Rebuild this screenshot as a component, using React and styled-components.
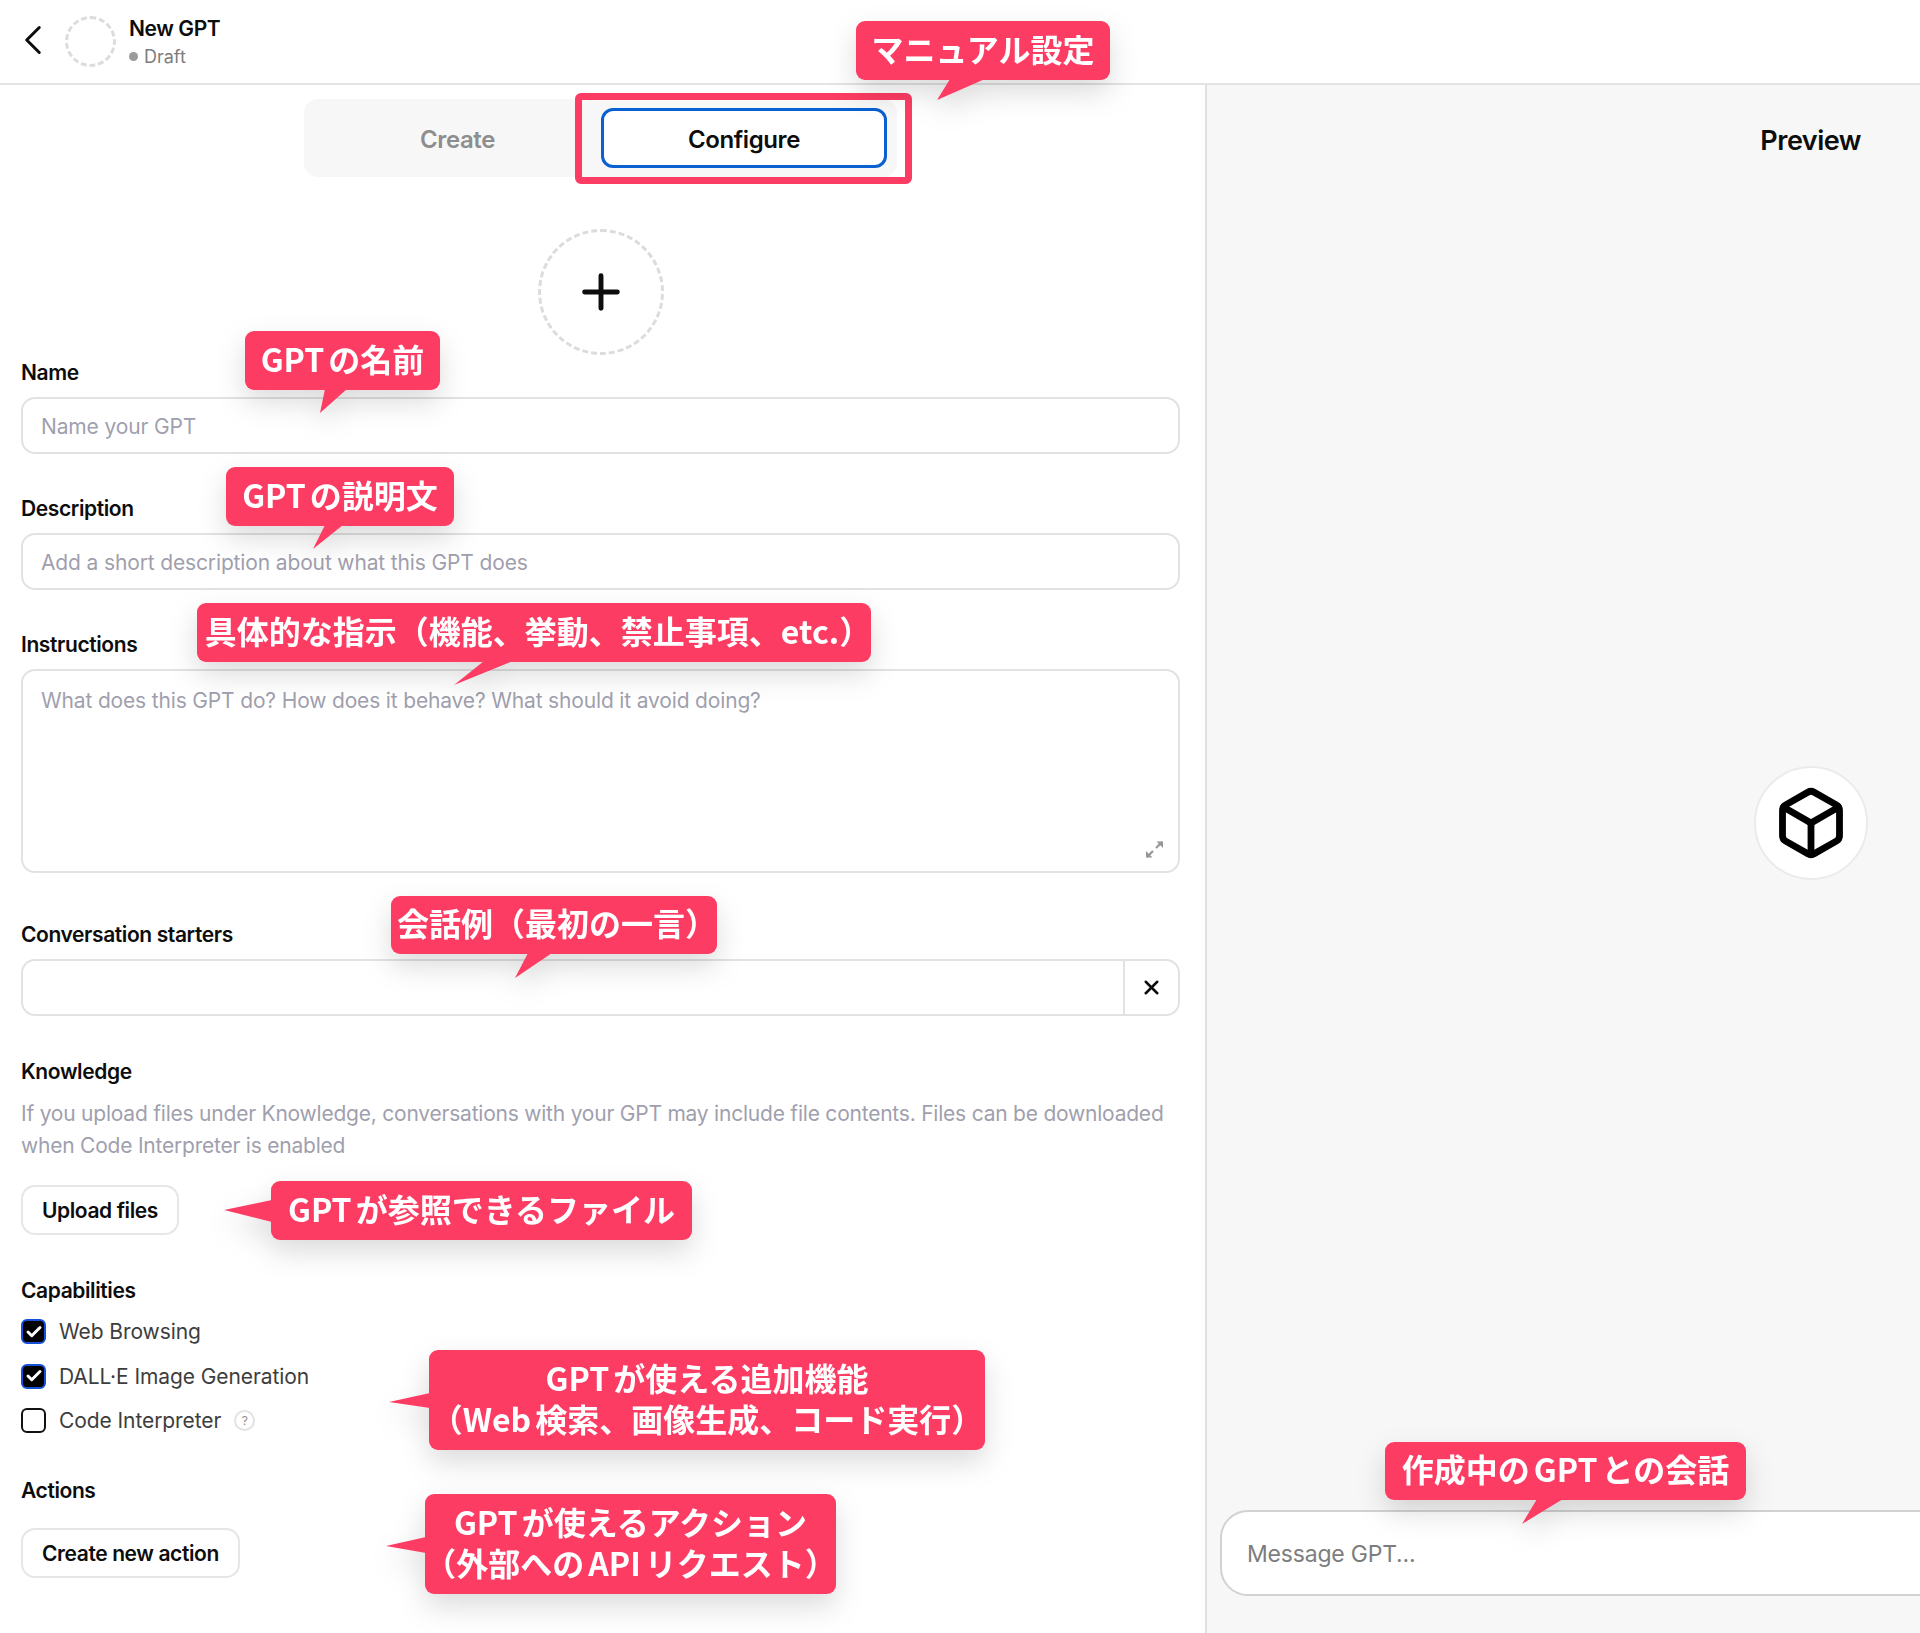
import styled, { createGlobalStyle } from 'styled-components';
import { ChevronLeft, Plus, X, Box, Check } from 'lucide-react';

const GlobalStyle = createGlobalStyle`
  html, body {
    margin: 0;
    padding: 0;
    background: #fff;
  }
  * {
    box-sizing: border-box;
  }
`

const UI_FONT = `Inter, "Noto Sans", "Liberation Sans", sans-serif`
const PINK = '#fd3c63'

const Page = styled.div`
  position: relative;
  width: 1920px;
  height: 1633px;
  overflow: hidden;
  font-family: ${UI_FONT};
  color: #0d0d0d;
  display: flex;
  flex-direction: column;
`

const TopBar = styled.header`
  height: 85px;
  flex: none;
  display: flex;
  align-items: center;
  padding-left: 8px;
  border-bottom: 2px solid #e3e3e3;
`

const BackIcon = styled(ChevronLeft)`
  width: 50px;
  height: 50px;
  margin-bottom: 3px;
  stroke-width: 1.45;
  color: #0d0d0d;
  flex: none;
`

const TopAvatar = styled.div`
  width: 51px;
  height: 51px;
  margin-left: 7px;
  margin-right: 13px;
  border: 3px dashed #dcdcdc;
  border-radius: 50%;
  flex: none;
`

const TitleBlock = styled.div`
  display: flex;
  flex-direction: column;
  gap: 2px;
`

const Title = styled.div`
  font-size: 21px;
  line-height: 28px;
  font-weight: 600;
  letter-spacing: -0.4px;
`

const DraftRow = styled.div`
  display: flex;
  align-items: center;
  gap: 6px;
  font-size: 18px;
  line-height: 24px;
  color: #7d7d7d;
`

const DraftDot = styled.span`
  width: 9px;
  height: 9px;
  border-radius: 50%;
  background: #9b9b9b;
`

const Main = styled.div`
  flex: 1;
  min-height: 0;
  display: flex;
`

const Editor = styled.div`
  width: 1205px;
  flex: none;
  padding: 14px 25px 0 21px;
  display: flex;
  flex-direction: column;
`

const Tabs = styled.div`
  width: 593px;
  height: 78px;
  margin-left: 283px;
  padding: 9px 10px;
  display: grid;
  grid-template-columns: 1fr 286px;
  background: #f7f7f7;
  border-radius: 14px;
  flex: none;
`

const Tab = styled.button`
  font-family: inherit;
  font-size: 24px;
  font-weight: 600;
  letter-spacing: -0.4px;
  background: ${(p) => (p.$active ? '#fff' : 'transparent')};
  color: ${(p) => (p.$active ? '#0d0d0d' : '#8e8e8e')};
  border: ${(p) => (p.$active ? '3px solid #0a60d0' : 'none')};
  border-radius: 12px;
  height: 60px;
  padding: 2px 0 0;
`

const AvatarPicker = styled.div`
  width: 126px;
  height: 126px;
  margin: 52px auto 5px;
  display: flex;
  align-items: center;
  justify-content: center;
  border: 3px dashed #dcdcdc;
  border-radius: 50%;
  flex: none;
`

const PlusIcon = styled(Plus)`
  width: 56px;
  height: 56px;
  stroke-width: 2.1;
  color: #0d0d0d;
`

const Section = styled.section`
  margin-bottom: ${(p) => p.$after || 42}px;
  flex: none;
`

const Label = styled.div`
  font-size: 21px;
  line-height: 26px;
  font-weight: 600;
  letter-spacing: -0.4px;
  margin-bottom: ${(p) => p.$after || 11}px;
`

const TextInput = styled.input`
  display: block;
  width: 100%;
  height: 57px;
  padding: 2px 18px 0;
  font-family: inherit;
  font-size: 21px;
  letter-spacing: -0.14px;
  background: #fff;
  border: 2px solid #e2e2e2;
  border-radius: 14px;
  outline: none;

  &::placeholder {
    color: #9f9fae;
    opacity: 1;
  }
`

const TextAreaWrap = styled.div`
  position: relative;
  height: 204px;
`

const TextArea = styled.textarea`
  display: block;
  width: 100%;
  height: 100%;
  padding: 16px 18px;
  font-family: inherit;
  font-size: 21px;
  line-height: 28px;
  letter-spacing: -0.16px;
  background: #fff;
  border: 2px solid #e2e2e2;
  border-radius: 14px;
  outline: none;
  resize: none;

  &::placeholder {
    color: #9f9fae;
    opacity: 1;
  }
`

const ExpandIcon = styled.svg`
  position: absolute;
  right: 16px;
  bottom: 14px;
  width: 19px;
  height: 19px;
  color: #969696;
`

const StarterRow = styled.div`
  display: flex;
  height: 57px;
  background: #fff;
  border: 2px solid #e2e2e2;
  border-radius: 14px;
`

const StarterInput = styled.div`
  flex: 1;
`

const StarterRemove = styled.div`
  width: 55px;
  flex: none;
  display: flex;
  align-items: center;
  justify-content: center;
  border-left: 2px solid #e2e2e2;
`

const RemoveIcon = styled(X)`
  width: 23px;
  height: 23px;
  stroke-width: 2.6;
  color: #0d0d0d;
`

const Hint = styled.p`
  margin: 0 0 23px;
  font-size: 21px;
  line-height: 32px;
  letter-spacing: -0.22px;
  color: #9f9fae;
  white-space: nowrap;
`

const OutlineButton = styled.button`
  display: block;
  height: ${(p) => p.$height || 50}px;
  padding: 0 19px;
  font-family: inherit;
  font-size: 21px;
  font-weight: 600;
  letter-spacing: -0.4px;
  color: #0d0d0d;
  background: #fff;
  border: 2px solid #e6e6e6;
  border-radius: 14px;
`

const CheckList = styled.div`
  display: flex;
  flex-direction: column;
  gap: 19.5px;
`

const CheckRow = styled.div`
  display: flex;
  align-items: center;
  height: 25px;
  gap: 13px;
  font-size: 21px;
  letter-spacing: -0.08px;
  color: #3d3d3d;
`

const CheckBox = styled.span`
  width: 25px;
  height: 25px;
  flex: none;
  display: flex;
  align-items: center;
  justify-content: center;
  background: ${(p) => (p.$checked ? '#000' : '#fff')};
  border: 2px solid ${(p) => (p.$checked ? '#1450d8' : '#111')};
  border-radius: 6px;
`

const CheckMark = styled(Check)`
  width: 18px;
  height: 18px;
  stroke-width: 4;
  color: #fff;
`

const HelpDot = styled.span`
  width: 21px;
  height: 21px;
  display: flex;
  align-items: center;
  justify-content: center;
  font-size: 12px;
  color: #8e8e8e;
  border: 2px solid #e3e3e3;
  border-radius: 50%;
`

const PreviewPane = styled.div`
  flex: 1;
  min-width: 0;
  display: flex;
  flex-direction: column;
  background: #f7f7f7;
  border-left: 2px solid #e0e0e0;
  overflow: hidden;
`

const PreviewHeader = styled.div`
  height: 112px;
  padding: 29px 59px 0 0;
  text-align: right;
  font-size: 27px;
  line-height: 54px;
  font-weight: 600;
  letter-spacing: -0.5px;
  flex: none;
`

const PreviewBody = styled.div`
  flex: 1;
  display: flex;
  align-items: center;
  justify-content: flex-end;
  padding: 0 52px 62px 0;
`

const CubeBadge = styled.div`
  width: 114px;
  height: 114px;
  display: flex;
  align-items: center;
  justify-content: center;
  background: #fff;
  border: 2px solid #ebebeb;
  border-radius: 50%;
`

const CubeIcon = styled(Box)`
  width: 76px;
  height: 76px;
  stroke-width: 2.15;
  color: #000;
`

const MessageBar = styled.div`
  width: 900px;
  height: 86px;
  margin: 0 0 37px 13px;
  padding: 2px 25px 0;
  display: flex;
  align-items: center;
  background: #fff;
  border: 2px solid #d2d2d2;
  border-radius: 28px;
  flex: none;
`

const MessageInput = styled.input`
  flex: 1;
  border: none;
  outline: none;
  padding: 0;
  font-family: inherit;
  font-size: 23px;
  letter-spacing: -0.2px;
  background: transparent;

  &::placeholder {
    color: #7d7d7d;
    opacity: 1;
  }
`

const Highlight = styled.div`
  position: absolute;
  left: 575px;
  top: 93px;
  width: 337px;
  height: 91px;
  border: 7px solid ${PINK};
  border-radius: 6px;
`

const Callout = styled.div`
  position: absolute;
  left: ${(p) => p.$x}px;
  top: ${(p) => p.$y}px;
  width: ${(p) => p.$w}px;
  height: ${(p) => p.$h}px;
  padding: 0 0 5px ${(p) => p.$nudge || 0}px;
  display: flex;
  flex-direction: column;
  align-items: center;
  justify-content: center;
  background: ${PINK};
  border-radius: 9px;
  filter: drop-shadow(0 12px 14px rgba(0, 0, 0, 0.14));
  color: #fff;
  font-family: "Noto Sans CJK JP", "Liberation Sans", sans-serif;
  font-size: 32px;
  line-height: 41px;
  font-weight: 700;
  white-space: nowrap;
  word-spacing: -0.1em;
`

const Tail = styled.svg`
  position: absolute;
  left: 0;
  top: 0;
  width: 100%;
  height: 100%;
  overflow: visible;
  fill: ${PINK};
`

// box x, y, w, h and the tail triangle, tail points are relative to the box
const CALLOUTS = [
  { x: 856, y: 21, w: 254, h: 59, tail: '94,58 129,58 81,79', lines: ['マニュアル設定'] },
  { x: 245, y: 331, w: 195, h: 59, tail: '80,58 102,58 75,82', lines: ['GPT の名前'] },
  { x: 226, y: 467, w: 228, h: 59, tail: '99,58 117,58 87,82', lines: ['GPT の説明文'] },
  { x: 197, y: 603, w: 674, h: 59, nudge: 8, tail: '287,58 316,58 257,82', lines: ['具体的な指示（機能、挙動、禁止事項、etc.）'] },
  { x: 391, y: 896, w: 326, h: 58, nudge: 6, tail: '137,57 161,57 124,82', lines: ['会話例（最初の一言）'] },
  { x: 271, y: 1181, w: 421, h: 59, tail: '1,19 1,41 -47,29', lines: ['GPT が参照できるファイル'] },
  { x: 429, y: 1350, w: 556, h: 100, tail: '1,43 1,58 -40,52', lines: ['GPT が使える追加機能', '（Web 検索、画像生成、コード実行）'] },
  { x: 425, y: 1494, w: 411, h: 100, tail: '1,43 1,59 -39,52', lines: ['GPT が使えるアクション', '（外部への API リクエスト）'] },
  { x: 1385, y: 1442, w: 361, h: 58, tail: '152,57 178,57 137,82', lines: ['作成中の GPT との会話'] },
]

const CAPABILITIES = [
  { label: 'Web Browsing', checked: true },
  { label: 'DALL·E Image Generation', checked: true },
  { label: 'Code Interpreter', checked: false, help: true },
]

function App() {
  return (
    <Page>
      <GlobalStyle />
      <TopBar>
        <BackIcon />
        <TopAvatar />
        <TitleBlock>
          <Title>New GPT</Title>
          <DraftRow>
            <DraftDot />
            Draft
          </DraftRow>
        </TitleBlock>
      </TopBar>

      <Main>
        <Editor>
          <Tabs>
            <Tab>Create</Tab>
            <Tab $active>Configure</Tab>
          </Tabs>

          <AvatarPicker>
            <PlusIcon />
          </AvatarPicker>

          <Section>
            <Label>Name</Label>
            <TextInput placeholder="Name your GPT" />
          </Section>

          <Section>
            <Label>Description</Label>
            <TextInput placeholder="Add a short description about what this GPT does" />
          </Section>

          <Section $after={49}>
            <Label>Instructions</Label>
            <TextAreaWrap>
              <TextArea placeholder="What does this GPT do? How does it behave? What should it avoid doing?" />
              <ExpandIcon viewBox="0 0 19 19" fill="none" stroke="currentColor" strokeWidth="2.2">
                <path d="M11 8l6-6" />
                <path d="M11.5 1.5h6.5v6.5" fill="currentColor" stroke="none" />
                <path d="M8 11l-6 6" />
                <path d="M7.5 17.5H1v-6.5" fill="currentColor" stroke="none" />
              </ExpandIcon>
            </TextAreaWrap>
          </Section>

          <Section $after={43}>
            <Label>Conversation starters</Label>
            <StarterRow>
              <StarterInput />
              <StarterRemove>
                <RemoveIcon />
              </StarterRemove>
            </StarterRow>
          </Section>

          <Section $after={43}>
            <Label $after={13}>Knowledge</Label>
            <Hint>
              If you upload files under Knowledge, conversations with your GPT may include file contents. Files can be downloaded
              <br />
              when Code Interpreter is enabled
            </Hint>
            <OutlineButton>Upload files</OutlineButton>
          </Section>

          <Section $after={45}>
            <Label $after={15}>Capabilities</Label>
            <CheckList>
              {CAPABILITIES.map((c) => (
                <CheckRow key={c.label}>
                  <CheckBox $checked={c.checked}>{c.checked && <CheckMark />}</CheckBox>
                  {c.label}
                  {c.help && <HelpDot>?</HelpDot>}
                </CheckRow>
              ))}
            </CheckList>
          </Section>

          <Section>
            <Label $after={24}>Actions</Label>
            <OutlineButton>Create new action</OutlineButton>
          </Section>
        </Editor>

        <PreviewPane>
          <PreviewHeader>Preview</PreviewHeader>
          <PreviewBody>
            <CubeBadge>
              <CubeIcon />
            </CubeBadge>
          </PreviewBody>
          <MessageBar>
            <MessageInput placeholder="Message GPT..." />
          </MessageBar>
        </PreviewPane>
      </Main>

      <Highlight />
      {CALLOUTS.map((c) => (
        <Callout key={c.lines[0]} $x={c.x} $y={c.y} $w={c.w} $h={c.h} $nudge={c.nudge}>
          <Tail>
            <polygon points={c.tail} />
          </Tail>
          {c.lines.map((line) => (
            <div key={line}>{line}</div>
          ))}
        </Callout>
      ))}
    </Page>
  );
}

export default App;
